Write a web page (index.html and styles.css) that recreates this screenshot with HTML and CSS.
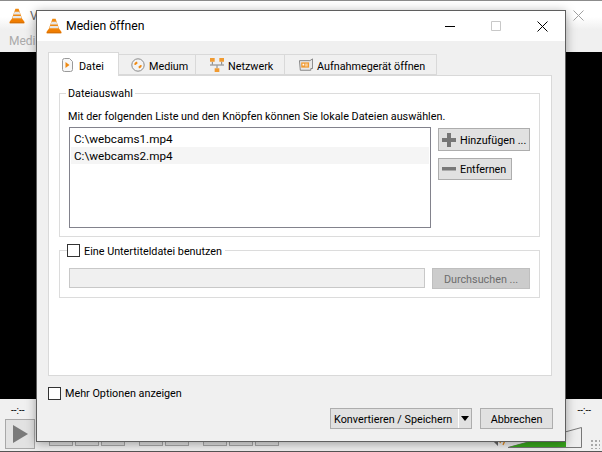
FILE: index.html
```html
<!DOCTYPE html>
<html lang="de">
<head>
<meta charset="utf-8">
<title>Medien öffnen</title>
<link rel="stylesheet" href="styles.css">
</head>
<body>
<svg class="defs" width="0" height="0">
  <symbol id="cone" viewBox="0 0 16 16">
    <path d="M6.400 0.800h3.200l4 11.200H2.400z" fill="#f08a12"/>
    <path d="M5.600 3.800h4.800l.9 2.800H4.700zM4.200 8h7.600l.8 2.200H3.400z" fill="#e6e6e6"/>
    <path d="M2.200 11.500h11.600l1.700 2.500v1.200H.5V14z" fill="#f07d00"/>
    <path d="M1 14.400h14v.8H1z" fill="#c96a08"/>
  </symbol>
</svg>

<div class="desktop">
  <div class="app">
    <div class="app-title">
      <svg class="cone-icon"><use href="#cone"/></svg>
      <span class="app-name">V</span>
      <span class="app-close">
        <svg width="11" height="11" viewBox="0 0 11 11"><path d="M.5.500l10 10M10.500.500l-10 10" stroke="#a0a0a0" fill="none"/></svg>
      </span>
    </div>
    <div class="app-menu">Medi</div>
    <div class="app-video"></div>
    <div class="app-time">
      <span>--:--</span>
      <span>--:--</span>
    </div>
    <div class="app-controls">
      <div class="play">
        <svg width="15" height="18" viewBox="0 0 15 18"><path d="M0 0l15 9-15 9z" fill="#7a7a7a"/></svg>
      </div>
      <div class="ctl-group">
        <i class="ctl"></i><i class="ctl"></i><i class="ctl"></i>
      </div>
      <div class="ctl-group">
        <i class="ctl"></i><i class="ctl"></i>
      </div>
      <div class="ctl-group">
        <i class="ctl"></i><i class="ctl"></i><i class="ctl"></i>
      </div>
      <div class="volume">
        <svg width="94" height="24" viewBox="0 0 94 24">
          <path d="M0 8h4l5-5v16l-5-5H0z" fill="#666"/>
          <path d="M11 6q3 5 0 10M14 4q4 7 0 14" stroke="#e08a20" fill="none" stroke-width="1.300"/>
          <path d="M19 20.500L92.500 .5V20.500z" fill="#eee" stroke="#777"/>
          <path d="M20 20L77 5V20z" fill="#38a81c"/>
        </svg>
      </div>
      <div class="grip"></div>
    </div>
  </div>

  <div class="dialog">
    <div class="dlg-title">
      <svg class="cone-icon"><use href="#cone"/></svg>
      <span class="dlg-name">Medien öffnen</span>
      <div class="win-buttons">
        <span class="win-btn"><svg width="10" height="10" viewBox="0 0 10 10"><path d="M0 5.500h10" stroke="#000"/></svg></span>
        <span class="win-btn"><svg width="10" height="10" viewBox="0 0 10 10"><path d="M.5.500h9v9h-9z" stroke="#c8c8c8" fill="none"/></svg></span>
        <span class="win-btn"><svg width="11" height="11" viewBox="0 0 11 11"><path d="M.5.500l10 10M10.500.500l-10 10" stroke="#000" fill="none"/></svg></span>
      </div>
    </div>

    <div class="dlg-body">
      <div class="tabs">
        <div class="tab active tab-file">
          <svg width="11" height="14" viewBox="0 0 11 14"><path d="M.5 2.500a2 2 0 0 1 2-2h5l3 3v8a2 2 0 0 1-2 2h-6a2 2 0 0 1-2-2z" fill="#f7f7f7" stroke="#9a9a9a"/><path d="M3.500 4l4 3-4 3z" fill="#f08a12"/></svg>
          <span>Datei</span>
        </div>
        <div class="tab tab-medium">
          <svg width="14" height="14" viewBox="0 0 14 14"><circle cx="7" cy="7" r="6.200" fill="#f4f4f4" stroke="#8a8a8a"/><path d="M3 6.500a4 4 0 0 1 3-3l.6 2a2 2 0 0 0-1.600 1.600zM11 7.500a4 4 0 0 1-3 3l-.6-2a2 2 0 0 0 1.600-1.600z" fill="#f08a12"/></svg>
          <span>Medium</span>
        </div>
        <div class="tab tab-net">
          <svg width="14" height="14" viewBox="0 0 15 15"><path d="M2.500 4v3M12.500 4v3M7.500 8v3" stroke="#777"/><path d="M0 7.500h15" stroke="#777"/><path d="M0 0h5v4H0zM10 0h5v4h-5zM5 11h5v4H5z" fill="#f09a30"/></svg>
          <span>Netzwerk</span>
        </div>
        <div class="tab tab-cap">
          <svg width="14" height="14" viewBox="0 0 16 15"><path d="M.5 2.500h12l3-2v11h-2v2h-12z" fill="#e8e8e8" stroke="#7a7a7a"/><path d="M2.500 4.500h9v6h-9z" fill="#f09a30"/><path d="M4 6h2v2H4zM7 6h3v1H7zM7 8h3v1H7z" fill="#fff"/></svg>
          <span>Aufnahmegerät öffnen</span>
        </div>
      </div>

      <div class="pane">
        <fieldset class="group group-files">
          <legend class="legend-text">Dateiauswahl</legend>
          <p class="hint">Mit der folgenden Liste und den Knöpfen können Sie lokale Dateien auswählen.</p>
          <div class="files-row">
            <div class="listbox">
              <div class="item">C:\webcams1.mp4</div>
              <div class="item alt">C:\webcams2.mp4</div>
            </div>
            <div class="side-buttons">
              <button class="btn btn-add" type="button">
                <svg width="14" height="14" viewBox="0 0 14 14"><path d="M5 0h4v5h5v4H9v5H5V9H0V5h5z" fill="#777"/></svg>
                <span>Hinzufügen ...</span>
              </button>
              <button class="btn btn-remove" type="button">
                <svg width="14" height="14" viewBox="0 0 14 14"><path d="M0 5h14v3.500H0z" fill="#777"/></svg>
                <span>Entfernen</span>
              </button>
            </div>
          </div>
        </fieldset>

        <fieldset class="group group-subs">
          <legend class="legend-check"><span class="check"></span><span class="check-label">Eine Untertiteldatei benutzen</span></legend>
          <div class="subs-row">
            <div class="sub-input"></div>
            <button class="btn btn-browse" type="button">Durchsuchen ...</button>
          </div>
        </fieldset>
      </div>

      <label class="more"><span class="check"></span><span class="more-label">Mehr Optionen anzeigen</span></label>

      <div class="actions">
        <div class="btn btn-split">
          <span class="split-label">Konvertieren / Speichern</span>
          <span class="split-arrow"><svg width="8" height="5" viewBox="0 0 8 5"><path d="M0 0h8L4 5z" fill="#000"/></svg></span>
        </div>
        <button class="btn btn-cancel" type="button">Abbrechen</button>
      </div>
    </div>
  </div>
</div>
</body>
</html>
```

FILE: styles.css
```css
* { box-sizing: border-box; }

html, body {
  margin: 0;
  padding: 0;
  width: 602px;
  height: 452px;
  overflow: hidden;
}

body {
  font-family: Roboto, "Open Sans", "Liberation Sans", sans-serif;
  font-size: 10.8px;
  line-height: 16px;
  color: #000;
}

.defs { position: absolute; }

.desktop {
  position: relative;
  width: 602px;
  height: 452px;
}

/* Background player window */
.app {
  width: 602px;
  height: 452px;
  display: flex;
  flex-direction: column;
  background: #f0f0f0;
  border-top: 1px solid #8c8c8c;
}

.app-title {
  height: 29px;
  display: flex;
  align-items: center;
  padding-left: 9px;
  background: linear-gradient(#fff 55%, #efefef);
}

.cone-icon { width: 16px; height: 16px; flex: none; }

.app-name { margin-left: 5px; font-size: 12px; color: #666; }

.app-close { margin-left: auto; margin-right: 18px; display: flex; }

.app-menu {
  height: 22px;
  padding: 3px 0 0 9px;
  font-size: 12px;
  color: #aaa;
  background: #f0f0f0;
}

.app-video { height: 347px; background: #000; }

.app-time {
  height: 20px;
  display: flex;
  justify-content: space-between;
  align-items: center;
  padding: 3px 11px 0 11px;
  font-size: 10px;
}

.app-controls {
  flex: 1;
  display: flex;
  align-items: flex-start;
  padding-left: 5px;
  position: relative;
  border-bottom: 1px solid #555;
}

.play {
  width: 30px;
  height: 30px;
  display: flex;
  align-items: center;
  justify-content: center;
  background: #e2e2e2;
  border: 1px solid #a8a8a8;
}

.ctl-group { display: flex; gap: 2px; margin-left: 14px; padding-top: 11px; }

.ctl {
  display: block;
  width: 24px;
  height: 16px;
  background: #e2e2e2;
  border: 1px solid #a8a8a8;
}

.volume { position: absolute; left: 489px; top: 8px; line-height: 0; }

.grip {
  position: absolute;
  right: 2px;
  bottom: 2px;
  width: 10px;
  height: 10px;
  background: radial-gradient(circle, #a8a8a8 1px, transparent 1.2px) 0 0 / 4px 4px;
}

/* Dialog */
.dialog {
  position: absolute;
  left: 36px;
  top: 10px;
  width: 530px;
  height: 432px;
  display: flex;
  flex-direction: column;
  background: #f0f0f0;
  border: 1px solid #5f5f5f;
  box-shadow: 0 2px 10px rgba(0, 0, 0, .35);
}

.dlg-title {
  height: 30px;
  flex: none;
  display: flex;
  align-items: center;
  padding-left: 9px;
  background: #fff;
}

.dlg-name { margin-left: 4px; font-size: 12.2px; }

.win-buttons { margin-left: auto; display: flex; }

.win-btn {
  width: 46px;
  height: 30px;
  display: flex;
  align-items: center;
  justify-content: center;
}

.dlg-body {
  flex: 1;
  display: flex;
  flex-direction: column;
  padding: 11px 13px 12px 11px;
}

/* Tabs */
.tabs {
  display: flex;
  align-items: flex-end;
  height: 23px;
  flex: none;
  position: relative;
  z-index: 1;
}

.tab {
  height: 21px;
  display: flex;
  align-items: center;
  gap: 4px;
  white-space: nowrap;
  background: #f0f0f0;
  border: 1px solid #d9d9d9;
  border-left: 0;
}

.tab span { padding-top: 4px; }

.tab.active {
  height: 24px;
  margin-bottom: -1px;
  background: #fff;
  border-left: 1px solid #d9d9d9;
  border-bottom: 0;
  gap: 6px;
}

.tab-file { width: 71px; padding-left: 13px; }
.tab-medium { width: 77px; padding-left: 12px; }
.tab-net { width: 89px; padding-left: 14px; }
.tab-cap { width: 152px; padding-left: 14px; }

.pane {
  width: 504px;
  height: 301px;
  flex: none;
  background: #fff;
  border: 1px solid #d9d9d9;
  padding: 8px 11px 0 10px;
}

/* Groups */
.group {
  margin: 0;
  border: 1px solid #dcdcdc;
  min-width: 0;
}

.group-files {
  height: 153px;
  padding: 0 9px;
}

.group-subs {
  height: 56px;
  margin-top: 5px;
  padding: 0 9px;
}

.legend-text {
  margin-left: -3px;
  padding: 2px 2px 0;
}

.legend-check {
  display: flex;
  align-items: center;
  gap: 4px;
  margin-left: -2px;
  padding: 0 3px 0 0;
  height: 16px;
}

.check-label { padding-top: 4px; }

.hint { margin: 7px 0 0 -1px; white-space: nowrap; }

.files-row {
  display: flex;
  gap: 7px;
  margin-top: 2px;
}

.listbox {
  width: 362px;
  height: 101px;
  flex: none;
  padding: 2px 4px;
  background: #fff;
  border: 1px solid #82828c;
}

.item {
  height: 17px;
  line-height: 19px;
  margin: 0 -3px;
  padding-left: 3px;
  font-size: 11.7px;
}

.item.alt { background: #f5f5f5; }

.side-buttons {
  display: flex;
  flex-direction: column;
  align-items: flex-start;
  gap: 7px;
  padding-top: 1px;
}

.btn {
  display: flex;
  align-items: center;
  margin: 0;
  padding: 0;
  font: inherit;
  white-space: nowrap;
  color: #000;
  background: #e1e1e1;
  border: 1px solid #adadad;
}

.btn-add span, .btn-remove span { padding-top: 2px; }

.btn-add { width: 92px; height: 23px; padding-left: 3px; gap: 4px; }
.btn-remove { width: 74px; height: 22px; padding-left: 3px; gap: 4px; }

.subs-row {
  display: flex;
  gap: 7px;
  margin-top: 10px;
}

.sub-input {
  width: 356px;
  height: 20px;
  background: #f0f0f0;
  border: 1px solid #c8c8c8;
}

.btn-browse {
  width: 98px;
  height: 21px;
  padding-top: 2px;
  justify-content: center;
  color: #6d6d6d;
  background: #cccccc;
  border-color: #bfbfbf;
}

/* Bottom */
.check {
  display: block;
  width: 13px;
  height: 13px;
  flex: none;
  background: #fff;
  border: 1px solid #333;
}

.more {
  display: flex;
  align-items: center;
  gap: 4px;
  margin-top: 9px;
  height: 16px;
}

.more-label { padding-top: 2px; }

.actions {
  display: flex;
  justify-content: flex-end;
  gap: 8px;
  margin-top: auto;
  margin-right: -1px;
}

.btn-split {
  width: 142px;
  height: 21px;
  padding-left: 3px;
}

.split-label { flex: 1; white-space: nowrap; padding-top: 2px; }

.split-arrow {
  width: 13px;
  height: 100%;
  display: flex;
  align-items: center;
  justify-content: center;
  border-left: 1px solid #fff;
  line-height: 0;
}

.btn-cancel {
  width: 73px;
  height: 21px;
  padding-top: 2px;
  justify-content: center;
}
```
